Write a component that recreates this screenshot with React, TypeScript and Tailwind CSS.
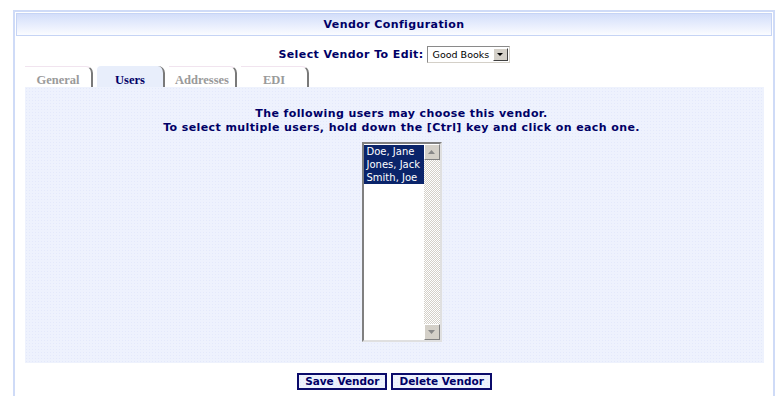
import React from "react";

const dots = "bg-[#eef2fd] bg-[radial-gradient(#e4e9fb_0.5px,transparent_0.7px)] bg-[length:3px_3px]";

function Tab({ label, active }: { label: string; active?: boolean }) {
  return (
    <div
      className={`relative w-[68px] h-[21px] flex items-end justify-center pb-px rounded-tr-[7px] border-r-2 border-r-[#7a7a7a] ${
        active
          ? "bg-[#e8eefb] text-[#000066] rounded-tl-[4px]"
          : "bg-white text-[#9a9a9a] border-t border-t-[#f1e4ef]"
      }`}
      style={{ fontFamily: '"Liberation Serif", "Times New Roman", serif' }}
    >
      <span className="text-[12.5px] font-bold leading-none">{label}</span>
    </div>
  );
}

function Tri({ down }: { down?: boolean }) {
  return (
    <svg width="7" height="4" viewBox="0 0 7 4">
      {down ? <polygon points="0,0 7,0 3.5,4" fill="#888" /> : <polygon points="0,4 7,4 3.5,0" fill="#888" />}
    </svg>
  );
}

export default function App() {
  return (
    <div
      className="bg-white w-[783px] h-[396px] overflow-hidden"
      style={{ fontFamily: '"DejaVu Sans", Verdana, sans-serif' }}
    >
      <div className="ml-[13px] mt-[10px] w-[762px] h-[386px] border-2 border-b-0 border-[#cfdbf7] px-px pt-px">
        <div className="h-[23px] pt-[2px] border border-[#c6d4f5] bg-gradient-to-b from-[#d3defa] to-[#fbfcff] flex items-center justify-center text-[11px] tracking-[0.4px] font-bold text-[#000066]">
          Vendor Configuration
        </div>

        <div className="mt-[10px] h-[17px] flex items-center justify-center gap-[3px]">
          <span className="pt-[2px] text-[11px] tracking-[0.4px] font-bold text-[#000066]">Select Vendor To Edit:</span>
          <div className="w-[83px] h-[17px] border border-[#8a8a8a] border-r-[#d4d0c8] border-b-[#d4d0c8] bg-white flex items-center">
            <span className="flex-1 pl-[5px] text-[9.5px] text-black leading-none">Good Books</span>
            <div className="w-[15px] h-[13px] mr-px bg-[#d4d0c8] border border-t-white border-l-white border-r-[#404040] border-b-[#404040] flex items-center justify-center">
              <svg width="6" height="3" viewBox="0 0 6 3"><polygon points="0,0 6,0 3,3" fill="#000" /></svg>
            </div>
          </div>
        </div>

        <div className="ml-[9px] mr-[8px]">
          <div className="mt-[3px] flex gap-[4px]">
            <Tab label="General" />
            <Tab label="Users" active />
            <Tab label="Addresses" />
            <Tab label="EDI" />
          </div>
          <div className={`${dots} h-[276px] pl-[14px] flex flex-col items-center`}>
            <p className="mt-[20px] text-[11px] tracking-[0.4px] font-bold text-[#000066] leading-[14px] text-center">
              The following users may choose this vendor.
              <br />
              To select multiple users, hold down the [Ctrl] key and click on each one.
            </p>
            <div className="mt-[7px] w-[80px] h-[200px] border-2 border-t-[#808080] border-l-[#808080] border-r-[#e0e0e0] border-b-[#e0e0e0] bg-white flex">
              <div className="flex-1 pt-px text-[10px] leading-[13px] text-white" style={{ fontFamily: '"DejaVu Sans", Tahoma, sans-serif' }}>
                <div className="bg-[#0a246a] pl-[3px]">Doe, Jane</div>
                <div className="bg-[#0a246a] pl-[3px]">Jones, Jack</div>
                <div className="bg-[#0a246a] pl-[3px]">Smith, Joe</div>
              </div>
              <div className="w-[16px] flex flex-col bg-[repeating-conic-gradient(#d4d0c8_0%_25%,#ffffff_0%_50%)] bg-[length:2px_2px]">
                <div className="h-[16px] bg-[#d4d0c8] border border-t-white border-l-white border-r-[#808080] border-b-[#808080] flex items-center justify-center">
                  <Tri />
                </div>
                <div className="flex-1" />
                <div className="h-[16px] bg-[#d4d0c8] border border-t-white border-l-white border-r-[#808080] border-b-[#808080] flex items-center justify-center">
                  <Tri down />
                </div>
              </div>
            </div>
          </div>
        </div>

        <div className="mt-[10px] flex justify-center gap-[4px] pl-[1px]">
          <button className={`${dots} h-[17px] px-[6px] border-2 border-[#0b0b6b] text-[10.5px] font-bold text-[#000066] leading-none`}>
            Save Vendor
          </button>
          <button className={`${dots} h-[17px] px-[6px] border-2 border-[#0b0b6b] text-[10.5px] font-bold text-[#000066] leading-none`}>
            Delete Vendor
          </button>
        </div>
      </div>
    </div>
  );
}
